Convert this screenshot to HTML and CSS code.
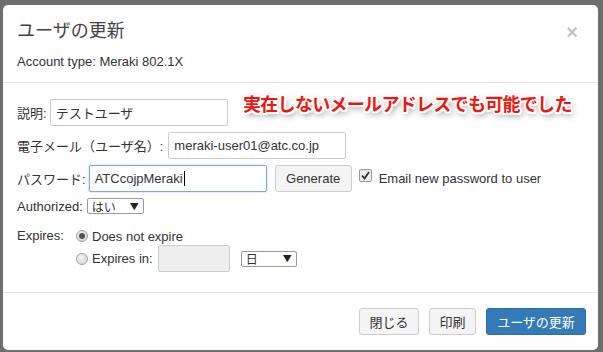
FILE: index.html
```html
<!DOCTYPE html>
<html lang="ja">
<head>
<meta charset="utf-8">
<title>ユーザの更新</title>
<link rel="stylesheet" href="styles.css">
</head>
<body>
<div class="modal">
  <div class="modal-header">
    <span class="close">×</span>
    <h4 class="title">ユーザの更新</h4>
    <p class="acct">Account type: Meraki 802.1X</p>
  </div>
  <div class="modal-body">
    <div class="note">実在しないメールアドレスでも可能でした</div>
    <div class="row">
      <span class="label">説明:</span>
      <span class="input">テストユーザ</span>
    </div>
    <div class="row">
      <span class="label wide">電子メール（ユーザ名）:</span>
      <span class="input">meraki-user01@atc.co.jp</span>
    </div>
    <div class="row">
      <span class="label">パスワード:</span>
      <span class="input focus">ATCcojpMeraki<span class="caret"></span></span>
      <span class="btn gen">Generate</span>
      <span class="check"><svg width="13" height="13" viewBox="0 0 13 13"><rect x="0.5" y="0.5" width="12" height="12" rx="1.5" fill="#eee" stroke="#999"/><path d="M3 6.5 L5.5 9.5 L10 3" fill="none" stroke="#333" stroke-width="1.8"/></svg></span>
      <span class="check-label">Email new password to user</span>
    </div>
    <div class="row auth">
      <span class="label">Authorized:</span>
      <span class="select sel-auth"><span>はい</span><span class="arrow">▼</span></span>
    </div>
    <div class="expires">
      <span class="label exp-label">Expires:</span>
      <div class="exp-opts">
        <div class="opt">
          <span class="radio checked"></span>
          <span>Does not expire</span>
        </div>
        <div class="opt">
          <span class="radio"></span>
          <span>Expires in:</span>
          <span class="input disabled"></span>
          <span class="select sel-day"><span>日</span><span class="arrow">▼</span></span>
        </div>
      </div>
    </div>
  </div>
  <div class="modal-footer">
    <span class="btn">閉じる</span>
    <span class="btn">印刷</span>
    <span class="btn primary">ユーザの更新</span>
  </div>
</div>
</body>
</html>
```
FILE: styles.css
```css
* { box-sizing: border-box; }
html, body {
  margin: 0;
  padding: 0;
  height: 100%;
  overflow: hidden;
}
body {
  background: #6e6e6e;
  font-family: "Liberation Sans", Arial, "Noto Sans CJK JP", sans-serif;
  font-size: 13px;
  color: #333;
  padding: 5px 5px 0 3px;
}
.modal {
  position: relative;
  width: 595px;
  height: 345px;
  background: #fff;
  border-radius: 5px;
}
.modal-header {
  position: relative;
  padding: 14px 14px 0 14px;
  height: 78px;
  border-bottom: 1px solid #e5e5e5;
}
.title {
  margin: 0;
  font-size: 18px;
  font-weight: normal;
  line-height: 24px;
  font-family: "Liberation Sans", "Noto Sans CJK JP", sans-serif;
  color: #444;
}
.acct {
  margin: 10px 0 0 0;
  line-height: 18px;
}
.close {
  position: absolute;
  right: 20px;
  top: 17px;
  font-size: 20px;
  font-weight: bold;
  color: #c4c4c4;
  line-height: 20px;
}
.modal-body {
  position: relative;
  padding: 16px 14px 0 14px;
  height: 210px;
  border-bottom: 1px solid #e5e5e5;
}
.note {
  position: absolute;
  left: 240px;
  top: 8px;
  font-size: 18px;
  font-weight: bold;
  color: #f2150f;
  letter-spacing: -0.7px;
  font-family: "Noto Sans CJK JP", sans-serif;
  line-height: 24px;
  text-shadow:
    -2px 0 0 #fff, 2px 0 0 #fff, 0 -2px 0 #fff, 0 2px 0 #fff,
    -1.5px -1.5px 0 #fff, 1.5px 1.5px 0 #fff, -1.5px 1.5px 0 #fff, 1.5px -1.5px 0 #fff,
    2px 3px 6px rgba(0,0,0,0.6);
}
.row {
  display: flex;
  align-items: center;
  height: 27px;
  margin-bottom: 6px;
}
.label { margin-right: 3px; white-space: nowrap; }
.label.wide { margin-right: 5px; }
.input {
  display: inline-flex;
  align-items: center;
  width: 178px;
  height: 27px;
  border: 1px solid #ccc;
  border-radius: 2px;
  padding: 0 5px;
  background: #fff;
  white-space: nowrap;
}
.input.focus {
  border-color: #7fa7e0;
  box-shadow: 0 0 2px rgba(102,150,230,0.6);
}
.caret {
  display: inline-block;
  width: 1px;
  height: 15px;
  background: #000;
  margin-left: 1px;
}
.btn {
  display: inline-flex;
  align-items: center;
  justify-content: center;
  height: 27px;
  padding: 0 10px;
  border: 1px solid #ccc;
  border-radius: 3px;
  background: #f4f4f4;
  color: #333;
  white-space: nowrap;
}
.gen { margin-left: 8px; width: 77px; }
.check { margin-left: 7px; display: inline-flex; margin-top: -6px; }
.check-label { margin-left: 7px; }
.row.auth { height: 16px; margin-top: 0; margin-bottom: 0; padding-top: 0; }
.select {
  display: inline-flex;
  align-items: center;
  justify-content: space-between;
  height: 16px;
  border: 1px solid #999;
  border-radius: 2px;
  padding: 0 4px 0 4px;
  font-size: 12px;
  font-family: "Noto Sans CJK JP", sans-serif;
  background: #fff;
}
.arrow { font-size: 9px; color: #222; }
.sel-auth { width: 57px; margin-left: 1px; }
.expires {
  display: flex;
  margin-top: 13px;
}
.exp-label { width: 59px; margin-right: 0; line-height: 18px; }
.exp-opts { display: flex; flex-direction: column; }
.opt { display: flex; align-items: center; height: 18px; }
.opt + .opt { height: 27px; margin-top: 0; }
.radio {
  display: inline-block;
  width: 12px;
  height: 12px;
  border-radius: 50%;
  border: 1px solid #a0a0a0;
  background: radial-gradient(circle at 40% 35%, #f4f4f4, #d0d0d0);
  margin-right: 4px;
  position: relative;
}
.radio.checked::after {
  content: "";
  position: absolute;
  left: 2px; top: 2px;
  width: 6px; height: 6px;
  border-radius: 50%;
  background: #555;
}
.input.disabled {
  width: 72px;
  background: #eee;
  margin-left: 5px;
}
.sel-day { width: 56px; margin-left: 11px; }
.modal-footer {
  display: flex;
  justify-content: flex-end;
  gap: 10px;
  padding: 15px 12px 0 0;
}
.btn.primary {
  background: #337ab7;
  border-color: #2e6da4;
  color: #fff;
  width: 100px;
}
.modal-footer .btn:nth-child(1) { width: 60px; }
.modal-footer .btn:nth-child(2) { width: 47px; }
.modal-footer .btn { font-family: "Noto Sans CJK JP", sans-serif; font-size: 13px; }
```
